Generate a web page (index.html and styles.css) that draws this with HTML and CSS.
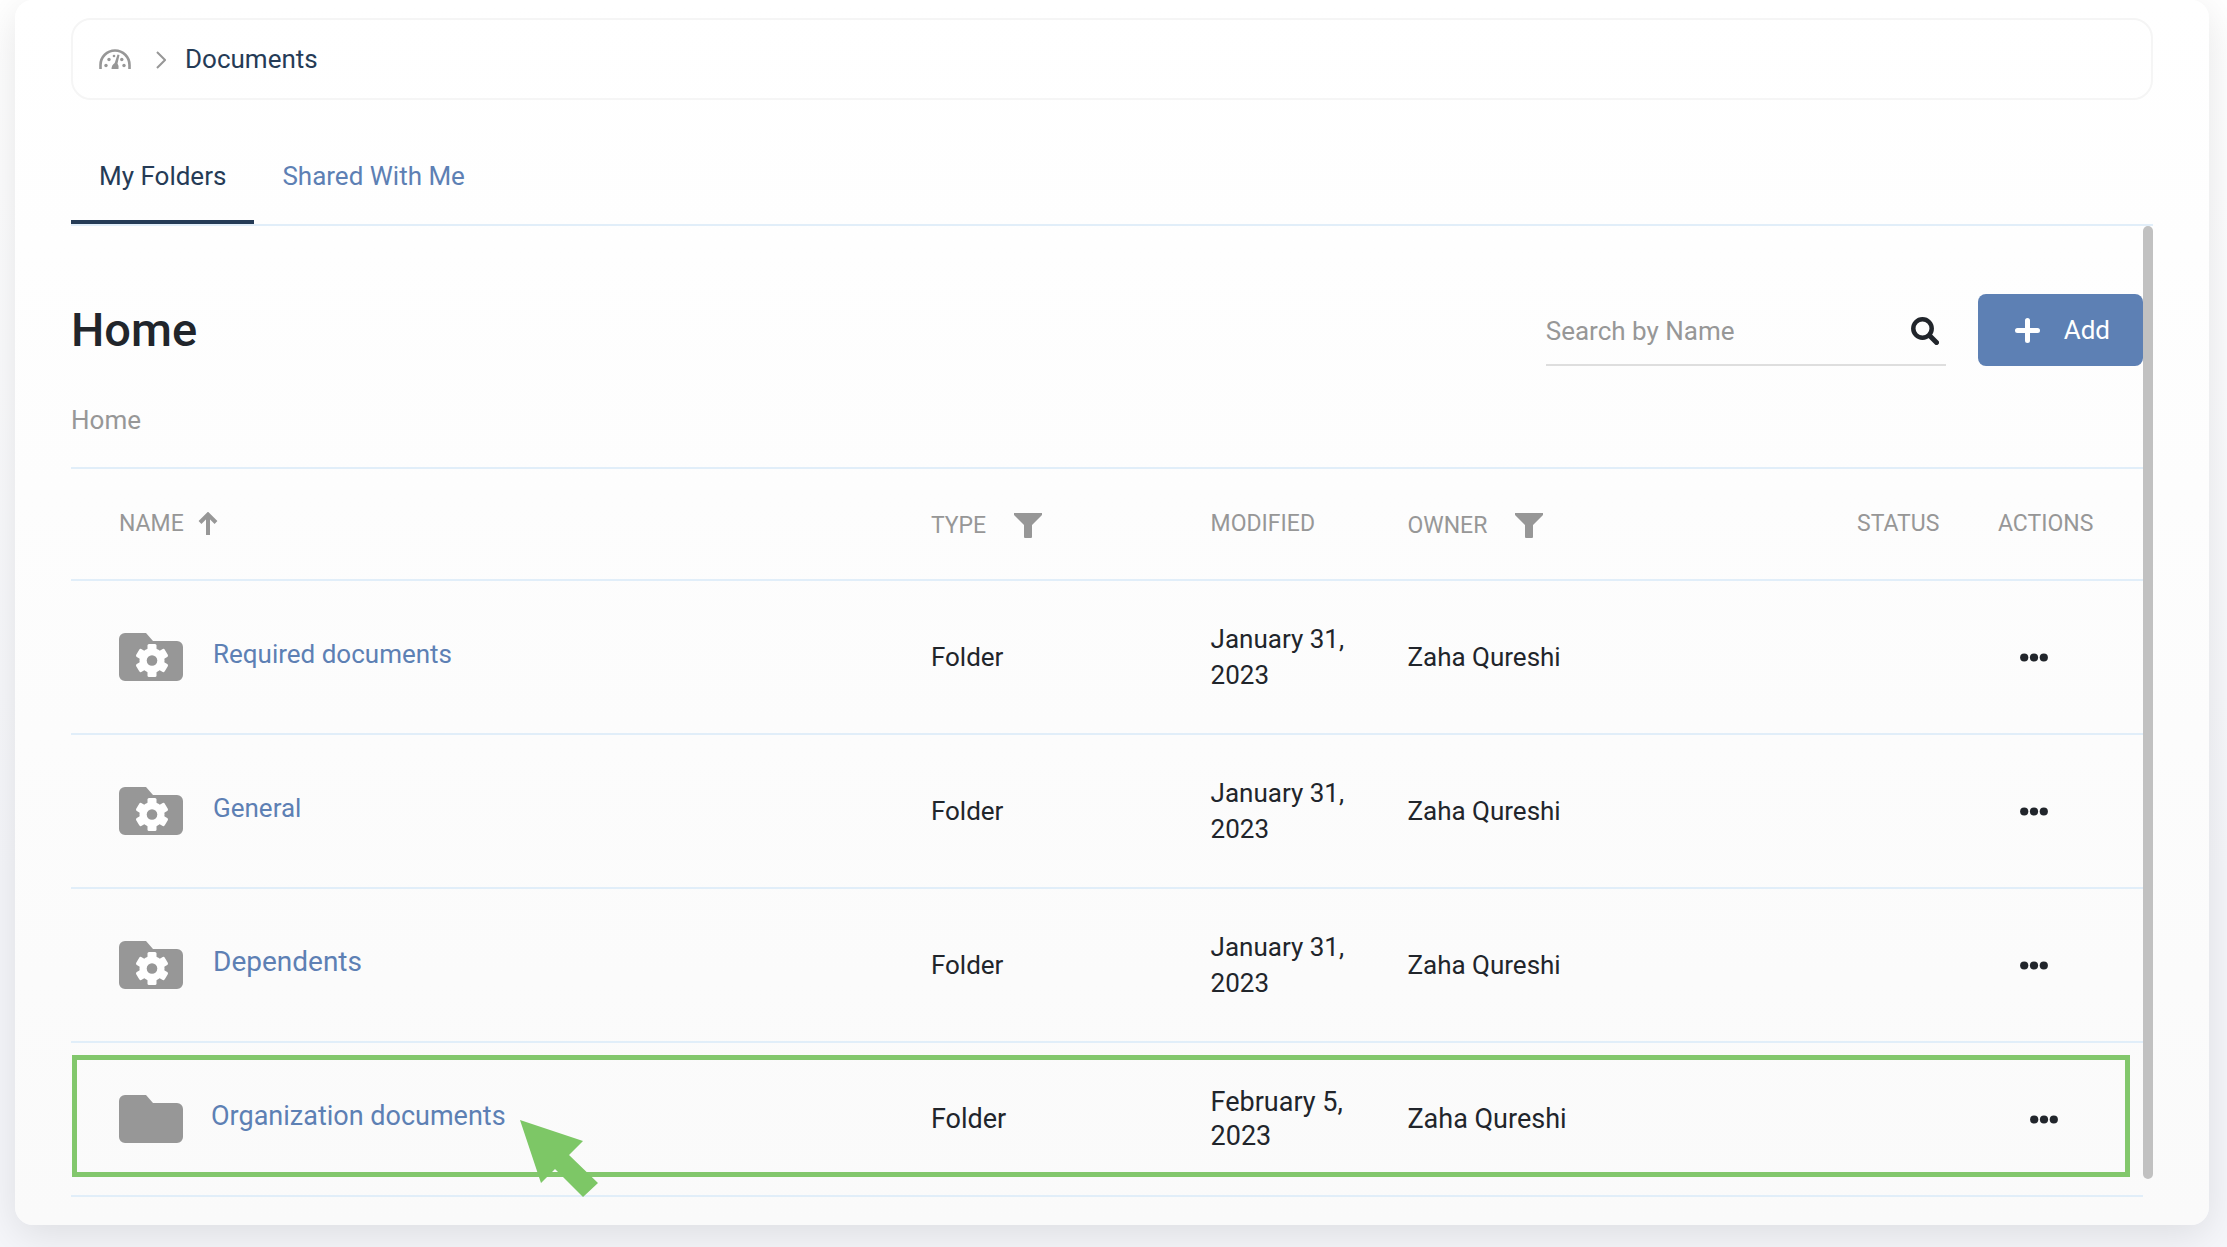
FILE: index.html
```
<!DOCTYPE html>
<html lang="en">
<head>
    <meta charset="UTF-8">
    <meta name="viewport" content="width=device-width, initial-scale=1.0">
    <title>Documents</title>
    <link rel="stylesheet" href="styles.css">
</head>
<body>
    <!-- Shared icons -->
    <svg class="icon-sprite" aria-hidden="true">
        <symbol id="icon-folder" viewBox="0 0 64 48">
            <path d="M6 0h21l7 8h24a6 6 0 0 1 6 6v28a6 6 0 0 1-6 6H6a6 6 0 0 1-6-6V6a6 6 0 0 1 6-6z" fill="#979797"/>
        </symbol>
        <symbol id="icon-folder-gear" viewBox="0 0 64 48">
            <path d="M6 0h21l7 8h24a6 6 0 0 1 6 6v28a6 6 0 0 1-6 6H6a6 6 0 0 1-6-6V6a6 6 0 0 1 6-6z" fill="#979797"/>
            <g fill="#fff">
                <circle cx="33" cy="27.500" r="12.500"/>
                <rect x="28.500" y="11" width="9" height="33" rx="1.500"/>
                <rect x="28.500" y="11" width="9" height="33" rx="1.500" transform="rotate(60 33 27.500)"/>
                <rect x="28.500" y="11" width="9" height="33" rx="1.500" transform="rotate(120 33 27.500)"/>
            </g>
            <circle cx="33" cy="27.500" r="5.300" fill="#979797"/>
        </symbol>
        <symbol id="icon-filter" viewBox="0 0 28 25">
            <path d="M1 0h26a1 1 0 0 1 1 2l-10 10v12a1 1 0 0 1-1 1h-6a1 1 0 0 1-1-1V12L0 2a1 1 0 0 1 1-2z" fill="#979797"/>
        </symbol>
        <symbol id="icon-dots" viewBox="0 0 28 9">
            <g fill="#21252b">
                <circle cx="4.200" cy="4.500" r="4.100"/>
                <circle cx="14" cy="4.500" r="4.100"/>
                <circle cx="23.800" cy="4.500" r="4.100"/>
            </g>
        </symbol>
    </svg>

    <main class="card">
        <nav class="breadcrumb" aria-label="Breadcrumb">
            <a href="#" class="breadcrumb-home" aria-label="Dashboard">
                <svg width="32" height="20" viewBox="0 0 32 20">
                    <path d="M1.500 20v-4a14.500 14.500 0 0 1 29 0v4" fill="none" stroke="#979797" stroke-width="2.600"/>
                    <g fill="#979797">
                        <circle cx="7" cy="16.500" r="1.700"/>
                        <circle cx="10" cy="10.500" r="1.700"/>
                        <circle cx="15" cy="7" r="1.300"/>
                        <circle cx="22.800" cy="10.500" r="1.700"/>
                        <circle cx="25" cy="16.500" r="1.700"/>
                        <path d="M18.500 5.500l2 .5-2 8.500q1.500 2 1 5.500h-7q0-4 3.200-6z"/>
                    </g>
                </svg>
            </a>
            <svg width="10" height="18" viewBox="0 0 10 18"><path d="M1 1l8 8-8 8" fill="none" stroke="#979797" stroke-width="2"/></svg>
            <span>Documents</span>
        </nav>

        <div class="tabs">
            <a href="#" class="tab active">My Folders</a>
            <a href="#" class="tab">Shared With Me</a>
        </div>

        <section class="content">
            <div class="toolbar">
                <h1>Home</h1>
                <form class="search">
                    <input type="text" placeholder="Search by Name" aria-label="Search by Name">
                    <button type="button" class="search-button" aria-label="Search">
                        <svg width="28" height="28" viewBox="0 0 28 28" fill="none" stroke="#21252b"><circle cx="11.500" cy="11.500" r="9.200" stroke-width="4.500"/><path d="M18.500 18.500l7 7" stroke-width="5" stroke-linecap="round"/></svg>
                    </button>
                </form>
                <button type="button" class="add-button">
                    <svg width="25" height="25" viewBox="0 0 25 25"><path d="M12.500 2.500v20M2.500 12.500h20" stroke="#fff" stroke-width="5" stroke-linecap="round"/></svg>
                    Add
                </button>
            </div>

            <p class="path">Home</p>

            <table class="documents">
                <colgroup>
                    <col class="col-name">
                    <col class="col-type">
                    <col class="col-modified">
                    <col class="col-owner">
                    <col class="col-status">
                    <col class="col-actions">
                </colgroup>
                <thead>
                    <tr>
                        <th>
                            <div class="heading">NAME
                                <svg class="sort-icon" width="20" height="24" viewBox="0 0 20 24"><path d="M10 23V3M2 10.500l8-8 8 8" fill="none" stroke="#979797" stroke-width="4"/></svg>
                            </div>
                        </th>
                        <th><div class="heading filterable">TYPE <svg class="filter-icon"><use href="#icon-filter"/></svg></div></th>
                        <th>MODIFIED</th>
                        <th><div class="heading filterable">OWNER <svg class="filter-icon"><use href="#icon-filter"/></svg></div></th>
                        <th>STATUS</th>
                        <th>ACTIONS</th>
                    </tr>
                </thead>
                <tbody>
                    <tr>
                        <td><div class="name"><svg class="folder-icon"><use href="#icon-folder-gear"/></svg><a href="#">Required documents</a></div></td>
                        <td>Folder</td>
                        <td class="date">January 31, 2023</td>
                        <td>Zaha Qureshi</td>
                        <td></td>
                        <td><button type="button" class="more" aria-label="Actions"><svg><use href="#icon-dots"/></svg></button></td>
                    </tr>
                    <tr>
                        <td><div class="name"><svg class="folder-icon"><use href="#icon-folder-gear"/></svg><a href="#">General</a></div></td>
                        <td>Folder</td>
                        <td class="date">January 31, 2023</td>
                        <td>Zaha Qureshi</td>
                        <td></td>
                        <td><button type="button" class="more" aria-label="Actions"><svg><use href="#icon-dots"/></svg></button></td>
                    </tr>
                    <tr>
                        <td><div class="name name-large"><svg class="folder-icon"><use href="#icon-folder-gear"/></svg><a href="#">Dependents</a></div></td>
                        <td>Folder</td>
                        <td class="date">January 31, 2023</td>
                        <td>Zaha Qureshi</td>
                        <td></td>
                        <td><button type="button" class="more" aria-label="Actions"><svg><use href="#icon-dots"/></svg></button></td>
                    </tr>
                    <tr class="highlighted">
                        <td>
                            <div class="name">
                                <svg class="folder-icon"><use href="#icon-folder"/></svg>
                                <a href="#">Organization documents</a>
                            </div>
                            <div class="outline"></div>
                            <svg class="pointer" width="78" height="78" viewBox="0 0 78 78"><path d="M0 0l63 21-14 14 29 28-15 14-28-28-14 14z" fill="#7dc766"/></svg>
                        </td>
                        <td>Folder</td>
                        <td class="date">February 5, 2023</td>
                        <td>Zaha Qureshi</td>
                        <td></td>
                        <td><button type="button" class="more" aria-label="Actions"><svg><use href="#icon-dots"/></svg></button></td>
                    </tr>
                </tbody>
            </table>
            <div class="scrollbar"></div>
        </section>
    </main>
</body>
</html>
```
FILE: styles.css
```
* {
    box-sizing: border-box;
}
body {
    margin: 0;
    padding: 0 18px 22px 15px;
    font-family: Roboto, "Liberation Sans", sans-serif;
    font-size: 26px;
    line-height: 36px;
    color: #21252b;
    background: linear-gradient(#ffffff, #f5f6fa 70%);
    overflow: hidden;
}
a {
    color: #5d80b4;
    text-decoration: none;
}
button {
    font: inherit;
    border: none;
    background: none;
    padding: 0;
    cursor: pointer;
}
svg {
    display: block;
    flex: none;
}
.icon-sprite {
    position: absolute;
    width: 0;
    height: 0;
}
.card {
    padding: 18px 56px 28px;
    background: linear-gradient(#ffffff, #fafafa);
    border-radius: 18px;
    box-shadow: 0 10px 40px rgba(0, 0, 0, 0.1);
}

/* Breadcrumb */
.breadcrumb {
    display: flex;
    align-items: center;
    height: 82px;
    padding: 0 26px;
    border: 2px solid #f5f5f5;
    border-radius: 20px;
    color: #253b56;
}
.breadcrumb > svg {
    margin: 2px 19px 0 25px;
}

/* Tabs */
.tabs {
    display: flex;
    margin-top: 30px;
    border-bottom: 2px solid #e1eef9;
}
.tab {
    padding: 30px 28px 28px;
    border-bottom: 4px solid transparent;
    line-height: 32px;
}
.tab.active {
    color: #253b56;
    border-bottom-color: #253b56;
}

/* Folder list */
.content {
    position: relative;
    padding: 68px 10px 0 0;
}
.toolbar {
    display: flex;
    align-items: center;
    height: 72px;
}
h1 {
    flex: 1;
    margin: 0;
    font-size: 47px;
    line-height: 56px;
    font-weight: 500;
}
.search {
    display: flex;
    align-items: center;
    width: 400px;
    height: 72px;
    margin-right: 32px;
    padding: 4px 7px 0 0;
    border-bottom: 2px solid #dedede;
}
.search input {
    flex: 1;
    min-width: 0;
    padding: 0;
    border: none;
    outline: none;
    background: none;
    font: inherit;
}
.search input::placeholder {
    color: #979797;
}
.add-button {
    display: flex;
    align-items: center;
    gap: 24px;
    height: 72px;
    padding: 0 33px 0 37px;
    border-radius: 8px;
    background: #5d80b4;
    color: #fff;
}
.path {
    margin: 36px 0 29px;
    color: #979797;
}
.documents {
    width: 100%;
    table-layout: fixed;
    border-spacing: 0;
}
.col-name { width: 41.5%; }
.col-type { width: 13.5%; }
.col-modified { width: 9.5%; }
.col-owner { width: 21.7%; }
.col-status { width: 6.8%; }
th, td {
    padding: 0;
    text-align: left;
    border-bottom: 2px solid #e1eef9;
}
th {
    height: 114px;
    border-top: 2px solid #e1eef9;
    font-size: 23px;
    font-weight: 400;
    color: #979797;
}
td {
    height: 154px;
}
th:first-child, td:first-child {
    padding-left: 48px;
}
.heading {
    display: flex;
    align-items: center;
}
.filterable {
    padding-top: 3px;
}
.sort-icon {
    margin-left: 14px;
}
.filter-icon {
    width: 28px;
    height: 25px;
    margin-left: 28px;
}
.name {
    display: flex;
    align-items: center;
    gap: 30px;
}
.name a {
    padding-bottom: 6px;
}
.name-large {
    font-size: 28px;
}
.folder-icon {
    width: 64px;
    height: 48px;
}
.date {
    padding-right: 40px;
}
.more {
    display: block;
    margin-left: 22px;
}
.more svg {
    width: 28px;
    height: 9px;
}

/* Highlighted folder with the pointer over it */
.highlighted {
    position: relative;
    font-size: 27px;
    line-height: 34px;
}
.highlighted .name {
    gap: 28px;
}
.highlighted .more {
    margin-left: 32px;
}
.outline {
    position: absolute;
    inset: 12px 13px 20px 1px;
    border: 5px solid #82c76c;
    pointer-events: none;
}
.pointer {
    position: absolute;
    top: 77px;
    left: 449px;
}

.scrollbar {
    position: absolute;
    top: 0;
    right: 0;
    bottom: 18px;
    width: 10px;
    border-radius: 5px;
    background: #c1c1c1;
}
```
